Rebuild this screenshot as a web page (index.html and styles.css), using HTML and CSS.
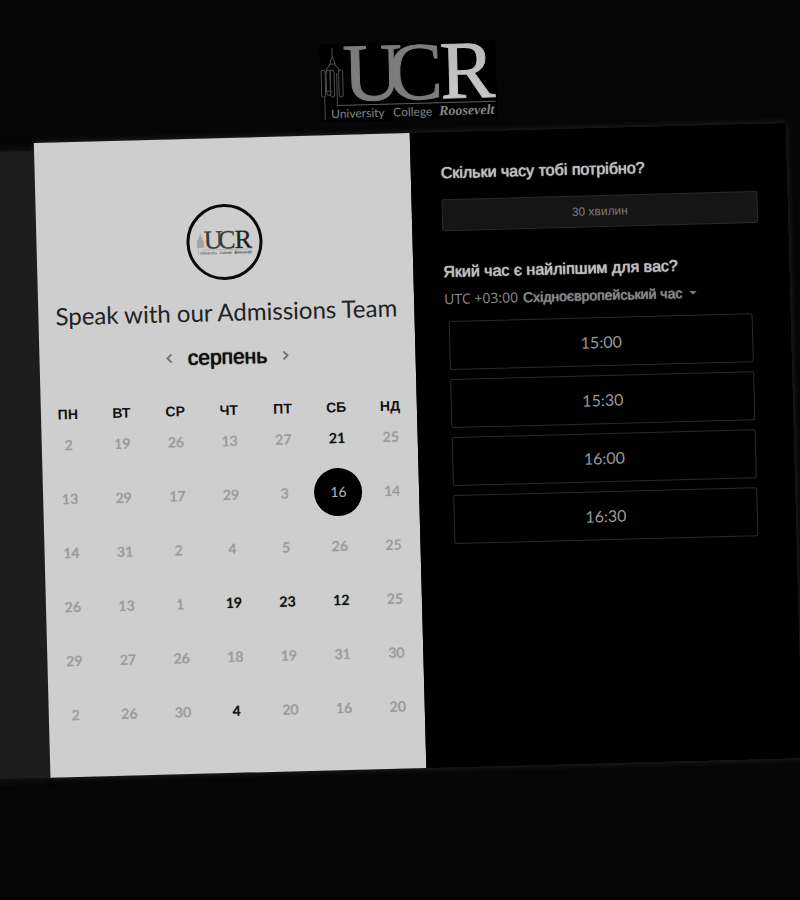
FILE: index.html
```html
<!DOCTYPE html>
<html lang="uk">
<head>
<meta charset="utf-8">
<meta name="viewport" content="width=device-width, initial-scale=1">
<title>Speak with our Admissions Team</title>
<link rel="stylesheet" href="styles.css">
</head>
<body>
<div class="page">
<div class="stage">
  <header class="brand">
    <svg class="brand-logo" viewBox="0 0 176 78" role="img" aria-label="UCR University College Roosevelt">
      <defs>
        <linearGradient id="shine" x1="0" y1="0" x2="0" y2="1">
          <stop offset="0" stop-color="#b4b4b4"/>
          <stop offset="1" stop-color="#cecece"/>
        </linearGradient>
      </defs>
      <rect width="176" height="78" fill="#000"/>
      <g fill="none" stroke="#4c4c4c" stroke-width="1">
        <path d="M12.500 4v9M12.500 13l-2 4v3l-4 5v4M12.500 13l2 4v3l4 5v4M9 20h7"/>
        <rect x="1" y="26" width="4" height="27" rx="2"/>
        <rect x="6" y="26" width="4" height="25" rx="2"/>
        <rect x="10" y="26" width="4" height="27" rx="2"/>
        <rect x="18.500" y="26" width="4" height="27" rx="2"/>
        <path d="M16.500 29v32M4 54v22M6 47h6"/>
      </g>
      <path d="M16 61.500H175" stroke="#5c5c5c"/>
      <g class="logo-caps">
        <text x="23" y="57" fill="#7c7c7c" stroke="#7c7c7c">U</text>
        <text x="68" y="57" fill="#7c7c7c" stroke="#7c7c7c">C</text>
        <text x="120" y="57" fill="url(#shine)" stroke="#bebebe">R</text>
      </g>
      <text class="logo-line" x="10" y="74" fill="#858585">University</text>
      <text class="logo-line" x="72" y="74" fill="#858585">College</text>
      <text class="logo-name" x="118" y="74" fill="#858585">Roosevelt</text>
    </svg>
  </header>

  <main class="panel">
    <section class="date-side">
      <div class="avatar">
        <svg class="avatar-logo" viewBox="0 0 176 78" role="img" aria-label="UCR">
          <g fill="#a2a2a2">
            <path d="M12 4l1 10 5 10v6h5v24H1V30h5v-6l5-10z"/>
            <path d="M4 54h2v22H4zM16 60h159v2H16z"/>
          </g>
          <g class="logo-caps">
            <text x="23" y="57" fill="#3a3a3a" stroke="#3a3a3a">U</text>
            <text x="68" y="57" fill="#3a3a3a" stroke="#3a3a3a">C</text>
            <text x="120" y="57" fill="#222" stroke="#222">R</text>
          </g>
          <text class="logo-line" x="10" y="75" fill="#333">University</text>
          <text class="logo-line" x="72" y="75" fill="#333">College</text>
          <text class="logo-name" x="118" y="75" fill="#333">Roosevelt</text>
        </svg>
      </div>
      <h1 class="title">Speak with our Admissions Team</h1>
      <div class="month">
        <button class="month-nav" type="button" aria-label="Попередній місяць">
          <svg viewBox="0 0 8 12"><path d="M6 2L2 6l4 4"/></svg>
        </button>
        <h2 class="month-name">серпень</h2>
        <button class="month-nav" type="button" aria-label="Наступний місяць">
          <svg viewBox="0 0 8 12"><path d="M2 2l4 4-4 4"/></svg>
        </button>
      </div>
      <table class="calendar">
        <thead>
          <tr><th>ПН</th><th>ВТ</th><th>СР</th><th>ЧТ</th><th>ПТ</th><th>СБ</th><th>НД</th></tr>
        </thead>
        <tbody>
          <tr><td><button disabled>2</button></td><td><button disabled>19</button></td><td><button disabled>26</button></td><td><button disabled>13</button></td><td><button disabled>27</button></td><td><button>21</button></td><td><button disabled>25</button></td></tr>
          <tr><td><button disabled>13</button></td><td><button disabled>29</button></td><td><button disabled>17</button></td><td><button disabled>29</button></td><td><button disabled>3</button></td><td><button class="selected" aria-pressed="true">16</button></td><td><button disabled>14</button></td></tr>
          <tr><td><button disabled>14</button></td><td><button disabled>31</button></td><td><button disabled>2</button></td><td><button disabled>4</button></td><td><button disabled>5</button></td><td><button disabled>26</button></td><td><button disabled>25</button></td></tr>
          <tr><td><button disabled>26</button></td><td><button disabled>13</button></td><td><button disabled>1</button></td><td><button>19</button></td><td><button>23</button></td><td><button>12</button></td><td><button disabled>25</button></td></tr>
          <tr><td><button disabled>29</button></td><td><button disabled>27</button></td><td><button disabled>26</button></td><td><button disabled>18</button></td><td><button disabled>19</button></td><td><button disabled>31</button></td><td><button disabled>30</button></td></tr>
          <tr><td><button disabled>2</button></td><td><button disabled>26</button></td><td><button disabled>30</button></td><td><button>4</button></td><td><button disabled>20</button></td><td><button disabled>16</button></td><td><button disabled>20</button></td></tr>
        </tbody>
      </table>
    </section>

    <section class="time-side">
      <h2 class="question">Скільки часу тобі потрібно?</h2>
      <button class="duration" type="button">30 хвилин</button>
      <h2 class="question">Який час є найліпшим для вас?</h2>
      <button class="timezone" type="button" aria-haspopup="listbox">
        <span class="offset">UTC +03:00</span>
        <span class="zone">Східноєвропейський час</span>
        <svg class="caret" viewBox="0 0 8 4"><path d="M0 0h8L4 4z"/></svg>
      </button>
      <div class="slots">
        <button class="slot" type="button">15:00</button>
        <button class="slot" type="button">15:30</button>
        <button class="slot" type="button">16:00</button>
        <button class="slot" type="button">16:30</button>
      </div>
    </section>
  </main>
</div>
</div>
</body>
</html>
```
FILE: styles.css
```css
* {
  box-sizing: border-box;
}

body {
  margin: 0;
  background: #060606;
  font-family: "Liberation Sans", sans-serif;
}

h1, h2 {
  margin: 0;
}

button {
  margin: 0;
  padding: 0;
  border: 0;
  background: none;
  color: inherit;
  font: inherit;
}

.page {
  overflow: hidden;
  border-bottom: 4px solid #000;
}

/* The whole booking card leans slightly anticlockwise. */
.stage {
  margin: 0 6px 0 42px;
  padding: 42px 0 129px;
  transform: rotate(-1.5deg);
  transform-origin: 50% 450px;
}

.brand {
  display: flex;
  justify-content: center;
  margin-bottom: 13px;
}

.brand-logo,
.avatar-logo {
  overflow: visible;
}

.brand-logo {
  width: 176px;
  height: 78px;
}

.logo-caps {
  font: 82px "Liberation Serif", serif;
}

.logo-line {
  font: 12px Lato, sans-serif;
}

.logo-name {
  font: italic bold 14px "Liberation Serif", serif;
}

.panel {
  position: relative;
  display: grid;
  grid-template-columns: 1fr 1fr;
  box-shadow: 0 0 6px #2c2c2c;
}

.panel::before {
  content: "";
  position: absolute;
  top: 8px;
  bottom: 0;
  right: 100%;
  width: 80px;
  background: #1d1d1d;
  box-shadow: 0 0 10px #1d1d1d;
}

.date-side {
  position: relative;
  padding: 66px 0 32px;
  background: #cecece;
  color: #111;
}

.avatar {
  display: flex;
  align-items: center;
  justify-content: center;
  width: 76px;
  height: 76px;
  margin: 0 auto 16px;
  border: 3px solid #0a0a0a;
  border-radius: 50%;
}

.avatar-logo {
  width: 56px;
  height: 25px;
}

.title {
  color: #222;
  font: 24px/32px Lato, sans-serif;
  text-align: center;
  white-space: nowrap;
}

.month {
  display: flex;
  align-items: center;
  justify-content: center;
  gap: 14px;
  margin: 15px 0 32px;
}

.month-name {
  font-size: 21px;
  font-weight: 400;
  line-height: 28px;
  text-shadow: 0 0 1px #111, 0 0 1px #111;
}

.month-nav {
  display: flex;
}

.month-nav svg {
  width: 8px;
  height: 12px;
  fill: none;
  stroke: #777;
  stroke-width: 2;
}

.calendar {
  width: 100%;
  table-layout: fixed;
  border-collapse: collapse;
  text-align: center;
}

.calendar th {
  padding: 0;
  font-size: 14px;
  line-height: 14px;
}

.calendar td {
  padding: 0 0 6px;
}

.calendar button {
  display: block;
  width: 48px;
  height: 48px;
  margin: 0 auto;
  padding-bottom: 2px;
  border-radius: 50%;
  font: 500 14px Lato, sans-serif;
  text-shadow: 0 0 1px currentColor;
}

.calendar button:disabled {
  color: #9c9c9c;
}

.calendar .selected {
  background: #000;
  color: #aaa;
  text-shadow: none;
}

.time-side {
  position: relative;
  padding: 31px 30px;
  background: #000;
  color: #bdbdbd;
}

.question {
  font-size: 16px;
  font-weight: 400;
  line-height: 20px;
  text-shadow: 0 0 1px #bdbdbd, 0 0 1px #bdbdbd;
}

.duration {
  display: block;
  width: 100%;
  height: 32px;
  margin: 16px 0 31px;
  border: 1px solid #292929;
  border-radius: 2px;
  background: #151515;
  color: #7c7c7c;
  font-size: 12px;
}

.timezone {
  display: flex;
  align-items: center;
  gap: 5px;
  margin: 7px 0 12px;
  color: #858585;
  line-height: 20px;
}

.offset {
  font-family: "Noto Sans", sans-serif;
  font-size: 14px;
}

.zone {
  font-size: 14px;
  text-shadow: 0 0 1px #858585, 0 0 1px #858585;
}

.caret {
  width: 8px;
  height: 4px;
  margin-left: 2px;
  fill: #777;
}

.slots {
  display: grid;
  gap: 9px;
  margin: 0 8px 0 4px;
}

.slot {
  height: 49px;
  border: 1px solid #2b2b2b;
  border-radius: 2px;
  color: #999;
  font: 16px Lato, sans-serif;
}
```
